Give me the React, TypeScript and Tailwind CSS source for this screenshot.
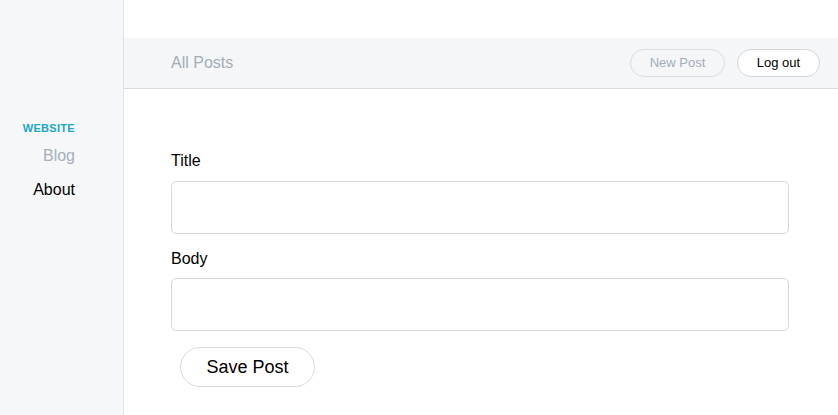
export default function App() {
  return (
    <div
      className="flex w-[838px] h-[415px] bg-white overflow-hidden text-black"
      style={{ fontFamily: '"Liberation Sans", Arial, sans-serif' }}
    >
      <aside className="w-[124px] shrink-0 h-full bg-[#f5f7f9] border-r border-[#dde1e4] pt-[122px] pr-[48px] text-right">
        <div className="text-[11px] leading-[13px] font-bold tracking-[0.3px] text-[#1ba9bf]">WEBSITE</div>
        <div className="mt-[4px] text-[16px] leading-[34px] text-[#a6b0b9]">Blog</div>
        <div className="text-[16px] leading-[34px] text-black">About</div>
      </aside>

      <main className="flex-1 min-w-0 flex flex-col">
        <div className="h-[38px] shrink-0" />
        <header className="h-[51px] shrink-0 bg-[#f5f6f8] border-b border-[#d9dde0] flex items-center justify-between pl-[47px] pr-[18px]">
          <span className="text-[16px] text-[#a3adb8]">All Posts</span>
          <div className="flex items-center gap-[12px]">
            <button className="w-[95px] h-[28px] rounded-full border border-[#d8dde1] text-[13px] text-[#a3adb8]">
              New Post
            </button>
            <button className="w-[83px] h-[28px] rounded-full border border-[#d3d8dc] text-[13px] text-black bg-white">
              Log out
            </button>
          </div>
        </header>

        <form className="pl-[47px] pr-[49px] pt-[63px]">
          <label className="block text-[16px] leading-[18px] mb-[11px]">Title</label>
          <input className="block w-full h-[53px] rounded-[5px] border border-[#d6dadd] outline-none" />
          <label className="block text-[16px] leading-[18px] mt-[16px] mb-[10px]">Body</label>
          <input className="block w-full h-[53px] rounded-[5px] border border-[#d6dadd] outline-none" />
          <button
            type="button"
            className="mt-[16px] ml-[9px] w-[135px] h-[40px] rounded-full border border-[#d6dadd] bg-white text-[18px] text-black"
          >
            Save Post
          </button>
        </form>
      </main>
    </div>
  );
}
